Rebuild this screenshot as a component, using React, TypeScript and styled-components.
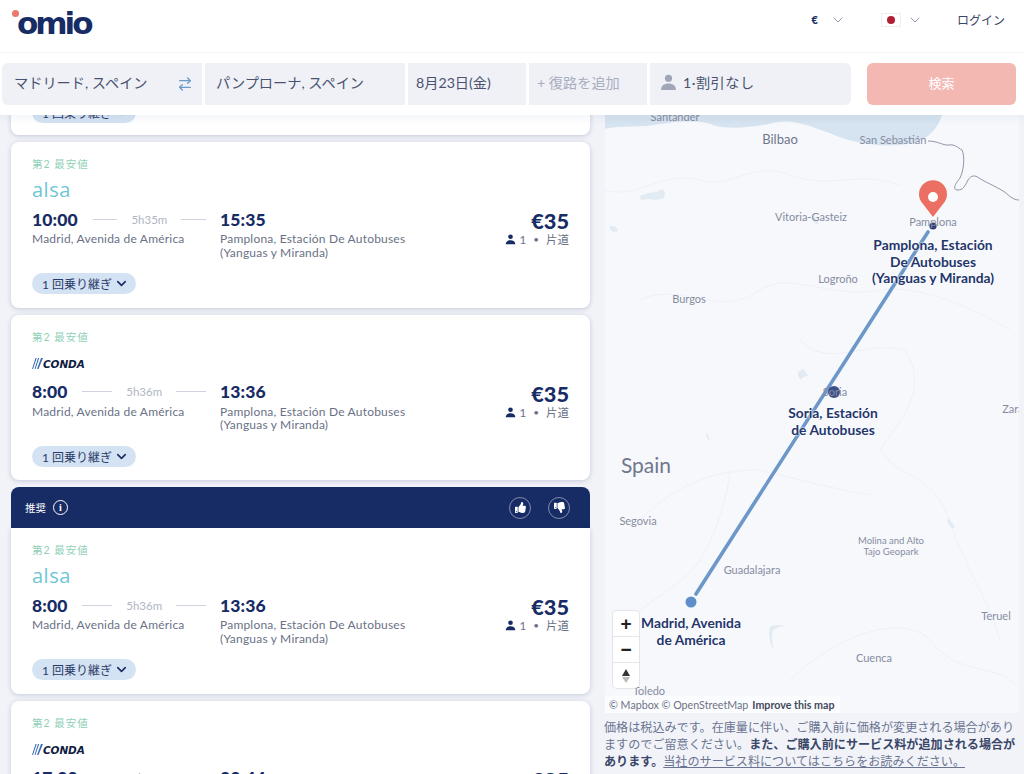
import React from "react";
import styled, { createGlobalStyle } from "styled-components";
import { ChevronDown, ArrowRightLeft } from "lucide-react";
import { FaThumbsUp, FaThumbsDown } from "react-icons/fa";

const Global = createGlobalStyle`
  html, body { margin: 0; padding: 0; height: 100%; overflow: hidden; background: #f1f3f8; }
  body { font-family: Lato, "Noto Sans CJK JP", sans-serif; color: #172b65; }
  * { box-sizing: border-box; }
`;

const Page = styled.div`
  height: 774px;
  display: flex;
  flex-direction: column;
  overflow: hidden;
`;
const TopBlock = styled.div`
  position: relative;
  z-index: 5;
  background: #fff;
  box-shadow: 0 3px 8px rgba(40, 60, 110, 0.06);
`;
const Header = styled.header`
  height: 53px;
  border-bottom: 1px solid #f3f4f8;
  display: flex;
  align-items: center;
  padding: 0 19px 13px 17px;
`;
const Logo = styled.div`
  position: relative;
  width: 76px;
  height: 30px;
  margin-top: 6px;
  display: flex;
  align-items: center;
  font-size: 31px;
  font-weight: 700;
  letter-spacing: -3px;
  color: #172b65;
  font-family: "DejaVu Sans", sans-serif;
  &::before {
    content: "";
    position: absolute;
    left: -5px;
    top: 2px;
    width: 7px;
    height: 7px;
    border-radius: 50%;
    background: #ea7a6f;
  }
`;
const HeaderRight = styled.div`
  margin-left: auto;
  display: flex;
  align-items: center;
  font-size: 12px;
  color: #3a4568;
`;
const Euro = styled.span`
  font-weight: 900;
  font-size: 11px;
  color: #172b65;
  margin-right: 12px;
`;
const ThinChevron = styled(ChevronDown)`
  width: 16px;
  height: 16px;
  color: #717a94;
  stroke-width: 1.2;
`;
const Flag = styled.span`
  width: 20px;
  height: 14px;
  background: #fff;
  border: 1px solid #eceef3;
  display: flex;
  align-items: center;
  justify-content: center;
  margin: 0 6px 0 35px;
  &::after {
    content: "";
    width: 8px;
    height: 8px;
    border-radius: 50%;
    background: #b11e33;
  }
`;
const Login = styled.span`
  margin-left: 34px;
`;
const SearchBar = styled.div`
  height: 62px;
  padding: 10px 8px 10px 2px;
  display: flex;
  align-items: stretch;
`;
const Fields = styled.div`
  display: flex;
  gap: 3px;
  width: 849px;
`;
const Field = styled.div<{ $w: number; $pad: number; $muted?: boolean; $pos?: "first" | "last" }>`
  width: ${(p) => p.$w}px;
  flex: none;
  background: #eff1f6;
  display: flex;
  align-items: center;
  padding: 0 8px 4px ${(p) => p.$pad}px;
  font-size: 14.2px;
  white-space: nowrap;
  color: ${(p) => (p.$muted ? "#a9aebf" : "#4a5270")};
  border-radius: ${(p) => (p.$pos === "first" ? "6px 0 0 6px" : p.$pos === "last" ? "0 6px 6px 0" : "0")};
`;
const FieldText = styled.span`
  flex: 1;
`;
const SwapIcon = styled(ArrowRightLeft)`
  width: 16px;
  height: 16px;
  color: #6c9ac9;
  margin-right: 1px;
  margin-top: 4px;
`;
const SearchButton = styled.button`
  margin-left: 16px;
  width: 149px;
  border: 0;
  border-radius: 6px;
  background: #f4b8b3;
  color: #fff;
  font: inherit;
  font-size: 13px;
  padding-bottom: 4px;
`;
const PersonSvg = styled.svg<{ $size: number; $color: string }>`
  width: ${(p) => p.$size}px;
  height: ${(p) => p.$size}px;
  fill: ${(p) => p.$color};
  flex: none;
`;
const Person = ({ size, color }: { size: number; color: string }) => (
  <PersonSvg $size={size} $color={color} viewBox="0 0 16 16">
    <circle cx="8" cy="4" r="3.4" />
    <path d="M1 15c0-4 3-6 7-6s7 2 7 6z" />
  </PersonSvg>
);
const PassengerText = styled.span`
  margin-left: 6px;
  letter-spacing: 0.5px;
`;

const Body = styled.main`
  flex: 1;
  min-height: 0;
  display: flex;
  overflow: hidden;
`;
const List = styled.div`
  width: 605px;
  flex: none;
  padding-left: 11px;
  padding-right: 15px;
  margin-top: -15px;
  display: flex;
  flex-direction: column;
  gap: 7px;
`;
const Card = styled.article<{ $flatTop?: boolean }>`
  background: #fff;
  border-radius: ${(p) => (p.$flatTop ? "0 0 8px 8px" : "8px")};
  box-shadow: 0 1px 5px rgba(40, 55, 105, 0.22);
  flex: none;
  height: 165.5px;
  padding: 0 21px;
  display: flex;
  flex-direction: column;
`;
const StubCard = styled(Card)`
  height: 35px;
`;
const Rank = styled.div`
  margin-top: 15px;
  height: 14px;
  line-height: 14px;
  font-size: 10.5px;
  letter-spacing: 1px;
  color: #8fd0b6;
`;
const LogoRow = styled.div`
  margin-top: 7px;
  height: 24px;
  display: flex;
  align-items: center;
`;
const Alsa = styled.span`
  font-family: "Open Sans", sans-serif;
  font-size: 20px;
  letter-spacing: 0.5px;
  line-height: 24px;
  color: #6fc6d6;
`;
const CondaWrap = styled.div`
  display: flex;
  align-items: center;
  padding-top: 2px;
`;
const CondaMark = styled.svg`
  width: 11px;
  height: 11px;
  fill: #3d6fb5;
  flex: none;
`;
const CondaText = styled.span`
  font-family: "DejaVu Sans", sans-serif;
  font-style: italic;
  font-weight: 700;
  font-size: 10.5px;
  letter-spacing: -0.1px;
  color: #101c40;
`;
const Journey = styled.div`
  display: flex;
  margin-top: 5px;
  height: 64px;
`;
const DepCol = styled.div`
  width: 174px;
  flex: none;
  margin-right: 14px;
`;
const TimeRow = styled.div`
  display: flex;
  align-items: center;
  height: 24px;
`;
const Time = styled.span`
  font-size: 17.5px;
  font-weight: 900;
  color: #172b65;
  margin-right: 15px;
  letter-spacing: 0.1px;
`;
const Line = styled.span`
  flex: 1;
  height: 1px;
  background: #cfd3de;
`;
const Duration = styled.span`
  font-size: 11.5px;
  color: #b1b5c4;
  margin: 0 14px;
`;
const ArrCol = styled.div`
  flex: 1;
`;
const Place = styled.div`
  font-size: 12px;
  line-height: 13.6px;
  color: #6a7186;
  margin-top: 1px;
  letter-spacing: 0.2px;
`;
const PriceCol = styled.div`
  display: flex;
  flex-direction: column;
  align-items: flex-end;
`;
const Price = styled.div`
  font-size: 21.7px;
  font-weight: 900;
  height: 25px;
  line-height: 28px;
`;
const PriceMeta = styled.div`
  display: flex;
  align-items: center;
  gap: 4px;
  font-size: 11.5px;
  color: #6a7186;
  line-height: 15px;
`;
const Dot = styled.span`
  margin: 0 3px;
  font-size: 10px;
`;
const Pill = styled.div`
  margin-top: 2px;
  align-self: flex-start;
  height: 21px;
  width: 104px;
  flex: none;
  border-radius: 11px;
  background: #d4e3f3;
  display: flex;
  align-items: center;
  padding-left: 10px;
  font-size: 12px;
  color: #2b3a68;
  white-space: nowrap;
`;
const PillChevron = styled(ChevronDown)`
  width: 15px;
  height: 15px;
  stroke-width: 2.5;
  color: #172b65;
  margin-left: 2px;
`;
const Recommended = styled.section`
  flex: none;
  display: flex;
  flex-direction: column;
`;
const RecHeader = styled.div`
  height: 41px;
  background: #172b65;
  border-radius: 8px 8px 0 0;
  display: flex;
  align-items: center;
  padding: 0 20px 0 14px;
  color: #fff;
  font-size: 10.5px;
`;
const InfoIcon = styled.span`
  width: 15px;
  height: 15px;
  margin-left: 7px;
  border-radius: 50%;
  border: 1.3px solid #fff;
  display: flex;
  align-items: center;
  justify-content: center;
  font-size: 10px;
  font-weight: 700;
  font-family: "Liberation Serif", serif;
`;
const RecActions = styled.div`
  margin-left: auto;
  display: flex;
  gap: 17px;
`;
const RoundButton = styled.span`
  width: 22px;
  height: 22px;
  border-radius: 50%;
  border: 1px solid rgba(255, 255, 255, 0.45);
  display: flex;
  align-items: center;
  justify-content: center;
  font-size: 11px;
  color: #fff;
`;

const Side = styled.aside`
  flex: 1;
  min-width: 0;
  display: flex;
  flex-direction: column;
`;
const MapBox = styled.div`
  position: relative;
  width: 414px;
  height: 598px;
  flex: none;
  overflow: hidden;
  background: #f6f8fc;
`;
const MapDrawing = styled.svg`
  position: absolute;
  inset: 0;
  width: 414px;
  height: 598px;
`;
const CityLabel = styled.span<{ $x: number; $y: number; $size: number; $dark?: boolean }>`
  position: absolute;
  left: ${(p) => p.$x - 605}px;
  top: ${(p) => p.$y - 115}px;
  transform: translate(-50%, -50%);
  font-size: ${(p) => p.$size}px;
  line-height: 1.1;
  white-space: nowrap;
  text-align: center;
  color: ${(p) => (p.$dark ? "#71778c" : "#868ca0")};
`;
const StopLabel = styled.span<{ $x: number; $y: number }>`
  position: absolute;
  left: ${(p) => p.$x - 605}px;
  top: ${(p) => p.$y - 115}px;
  transform: translateX(-50%);
  font-size: 13.8px;
  line-height: 16.7px;
  font-weight: 700;
  white-space: nowrap;
  text-align: center;
  color: #24366c;
  text-shadow: 0 0 2px #fff, 0 0 2px #fff;
`;
const Controls = styled.div`
  position: absolute;
  left: 8px;
  top: 496px;
  width: 26px;
  height: 77px;
  background: #fff;
  border-radius: 4px;
  box-shadow: 0 0 0 1px rgba(0, 0, 0, 0.08);
  display: flex;
  flex-direction: column;
`;
const ControlBtn = styled.div`
  flex: 1;
  display: flex;
  align-items: center;
  justify-content: center;
  font-size: 19px;
  font-weight: 900;
  color: #222;
  font-family: "Liberation Sans", sans-serif;
  border-bottom: 1px solid #e6e6e6;
  &:last-child {
    border-bottom: 0;
  }
`;
const CompassSvg = styled.svg`
  width: 10px;
  height: 16px;
`;
const Attribution = styled.div`
  position: absolute;
  left: 0;
  bottom: 0;
  height: 17px;
  width: 235px;
  padding-left: 4px;
  background: rgba(255, 255, 255, 0.55);
  font-size: 10.7px;
  line-height: 17px;
  color: #6c7284;
  white-space: nowrap;
`;
const Improve = styled.b`
  margin-left: 4px;
  color: #444a5c;
`;
const Note = styled.p`
  margin: 6px 0 0 -1px;
  width: 415px;
  font-size: 12.1px;
  line-height: 17px;
  color: #6b7491;
`;
const NoteStrong = styled.b`
  color: #3a4668;
`;
const NoteLink = styled.span`
  text-decoration: underline;
`;

type Trip = { logo: "alsa" | "conda"; dep: string; dur: string; arr: string };

const Conda = () => (
  <CondaWrap>
    <CondaMark viewBox="0 0 11 11">
      <path d="M3.5 0h1.2L1 11H0zM6 0h1.2L3.5 11H2.5zM9 0h2L6.5 11H5z" />
    </CondaMark>
    <CondaText>CONDA</CondaText>
  </CondaWrap>
);

const TripCard = ({ trip, flatTop }: { trip: Trip; flatTop?: boolean }) => (
  <Card $flatTop={flatTop}>
    <Rank>第2 最安値</Rank>
    <LogoRow>{trip.logo === "alsa" ? <Alsa>alsa</Alsa> : <Conda />}</LogoRow>
    <Journey>
      <DepCol>
        <TimeRow>
          <Time>{trip.dep}</Time>
          <Line />
          <Duration>{trip.dur}</Duration>
          <Line />
        </TimeRow>
        <Place>Madrid, Avenida de América</Place>
      </DepCol>
      <ArrCol>
        <TimeRow>
          <Time>{trip.arr}</Time>
        </TimeRow>
        <Place>
          Pamplona, Estación De Autobuses
          <br />
          (Yanguas y Miranda)
        </Place>
      </ArrCol>
      <PriceCol>
        <Price>€35</Price>
        <PriceMeta>
          <Person size={11} color="#172b65" />
          1<Dot>•</Dot>片道
        </PriceMeta>
      </PriceCol>
    </Journey>
    <Pill>
      1 回乗り継ぎ
      <PillChevron />
    </Pill>
  </Card>
);

const cities: { t: string; x: number; y: number; s: number; d?: boolean }[] = [
  { t: "Santander", x: 675, y: 117, s: 11 },
  { t: "Bilbao", x: 780, y: 139, s: 13, d: true },
  { t: "San Sebastián", x: 893, y: 140, s: 11 },
  { t: "Vitoria-Gasteiz", x: 811, y: 217, s: 11 },
  { t: "Pamplona", x: 933, y: 222, s: 11 },
  { t: "Logroño", x: 838, y: 279, s: 11 },
  { t: "Burgos", x: 689, y: 299, s: 11 },
  { t: "Soria", x: 835, y: 392, s: 11 },
  { t: "Zaragoza", x: 1024, y: 409, s: 11 },
  { t: "Spain", x: 646, y: 465, s: 21, d: true },
  { t: "Segovia", x: 638, y: 521, s: 11 },
  { t: "Guadalajara", x: 752, y: 570, s: 11 },
  { t: "Molina and Alto", x: 891, y: 541, s: 9.5 },
  { t: "Tajo Geopark", x: 891, y: 552, s: 9.5 },
  { t: "Teruel", x: 996, y: 616, s: 11 },
  { t: "Cuenca", x: 874, y: 658, s: 11 },
  { t: "Toledo", x: 649, y: 691, s: 11 },
];

export default function App() {
  return (
    <Page>
      <Global />
      <TopBlock>
        <Header>
          <Logo>omio</Logo>
          <HeaderRight>
            <Euro>€</Euro>
            <ThinChevron />
            <Flag />
            <ThinChevron />
            <Login>ログイン</Login>
          </HeaderRight>
        </Header>
        <SearchBar>
          <Fields>
            <Field $w={200} $pad={12} $pos="first">
              <FieldText>マドリード, スペイン</FieldText>
              <SwapIcon />
            </Field>
            <Field $w={200} $pad={11}>パンプローナ, スペイン</Field>
            <Field $w={118} $pad={8}>8月23日(金)</Field>
            <Field $w={118} $pad={8} $muted>+ 復路を追加</Field>
            <Field $w={201} $pad={10} $pos="last">
              <Person size={17} color="#a0a5b8" />
              <PassengerText>1·割引なし</PassengerText>
            </Field>
          </Fields>
          <SearchButton>検索</SearchButton>
        </SearchBar>
      </TopBlock>
      <Body>
        <List>
          <StubCard>
            <Pill>
              1 回乗り継ぎ
              <PillChevron />
            </Pill>
          </StubCard>
          <TripCard trip={{ logo: "alsa", dep: "10:00", dur: "5h35m", arr: "15:35" }} />
          <TripCard trip={{ logo: "conda", dep: "8:00", dur: "5h36m", arr: "13:36" }} />
          <Recommended>
            <RecHeader>
              推奨
              <InfoIcon>i</InfoIcon>
              <RecActions>
                <RoundButton>
                  <FaThumbsUp />
                </RoundButton>
                <RoundButton>
                  <FaThumbsDown />
                </RoundButton>
              </RecActions>
            </RecHeader>
            <TripCard flatTop trip={{ logo: "alsa", dep: "8:00", dur: "5h36m", arr: "13:36" }} />
          </Recommended>
          <TripCard trip={{ logo: "conda", dep: "17:00", dur: "5h44m", arr: "22:44" }} />
        </List>
        <Side>
          <MapBox>
            <MapDrawing viewBox="605 115 414 598">
              <path
                d="M604 115V129C620 125 640 128 660 124C680 121 700 119 716 126C735 130 760 126 778 122C795 119 815 128 832 134C850 142 875 147 898 145C920 144 936 135 942 115Z"
                fill="#d6e3f0"
              />
              <g fill="none" stroke="#eef1f6" strokeWidth="1">
                <path d="M604 190C640 200 660 170 700 180C730 190 750 160 790 175C830 190 860 170 900 185" />
                <path d="M640 300C680 280 720 320 760 290C790 270 830 300 880 290C910 285 960 300 1010 330" />
                <path d="M800 340C830 370 860 340 905 350C930 390 900 420 880 450C900 480 930 470 950 520C960 560 990 600 1000 640" />
                <path d="M640 520C680 480 720 470 760 470C800 480 840 490 870 495" />
                <path d="M612 640C640 600 680 590 700 560C720 530 730 480 730 470" />
                <path d="M790 680C830 640 900 610 930 640C960 680 1000 660 1019 690" />
              </g>
              <g fill="#e2eaf3">
                <path d="M640 196l8-3 8-1 6-3 3 3-1 6-8 2-8-1-7 1z" />
                <path d="M610 226l6 1 2 4-5 1-3-3z" />
                <path d="M811 214l5 4 3 5-3 1-4-4z" />
                <path d="M798 372l5-3 3 4 2 3-5 1-2 3-3-4z" />
                <path d="M706 432l3 5 1 4-3-3z" />
                <path d="M770 627c4-2 9-3 15-1-5 0-9 2-12 4-2 6-1 12 1 20-4-5-6-16-4-23z" />
                <path d="M947 518l6 6 2 4-3 0-4-5z" />
              </g>
              <path
                d="M928 141C938 141 944 146 949 145C955 144 958 148 962 150C965 156 964 170 960 178C955 184 952 190 958 190C963 190 965 186 968 180C971 175 975 175 979 178C985 182 995 186 1003 191C1008 194 1012 200 1019 200"
                fill="none"
                stroke="#8d95a6"
                strokeWidth="1"
              />
              <line x1="696" y1="594" x2="928" y2="232" stroke="#6c97c8" strokeWidth="3.6" strokeLinecap="round" />
              <circle cx="691" cy="602" r="5.5" fill="#5f8fcb" />
              <circle cx="834" cy="392" r="6" fill="#3b4f88" />
              <circle cx="933" cy="226" r="3.6" fill="#2f3f78" />
              <path d="M933 217L923 204A14 14 0 1 1 943 204Z" fill="#ec6f63" />
              <circle cx="933" cy="197" r="5" fill="#fff" />
            </MapDrawing>
            {cities.map((c) => (
              <CityLabel key={c.t} $x={c.x} $y={c.y} $size={c.s} $dark={c.d}>
                {c.t}
              </CityLabel>
            ))}
            <StopLabel $x={933} $y={237}>
              Pamplona, Estación
              <br />
              De Autobuses
              <br />
              (Yanguas y Miranda)
            </StopLabel>
            <StopLabel $x={833} $y={405}>
              Soria, Estación
              <br />
              de Autobuses
            </StopLabel>
            <StopLabel $x={691} $y={615}>
              Madrid, Avenida
              <br />
              de América
            </StopLabel>
            <Controls>
              <ControlBtn>+</ControlBtn>
              <ControlBtn>−</ControlBtn>
              <ControlBtn>
                <CompassSvg viewBox="0 0 10 16">
                  <path d="M5 1L9 8H1z" fill="#333" />
                  <path d="M5 15L9 9H1z" fill="#bbb" />
                </CompassSvg>
              </ControlBtn>
            </Controls>
            <Attribution>
              © Mapbox © OpenStreetMap<Improve>Improve this map</Improve>
            </Attribution>
          </MapBox>
          <Note>
            価格は税込みです。在庫量に伴い、ご購入前に価格が変更される場合がありますのでご留意ください。
            <NoteStrong>また、ご購入前にサービス料が追加される場合があります。</NoteStrong>
            <NoteLink>当社のサービス料についてはこちらをお読みください。</NoteLink>
          </Note>
        </Side>
      </Body>
    </Page>
  );
}
